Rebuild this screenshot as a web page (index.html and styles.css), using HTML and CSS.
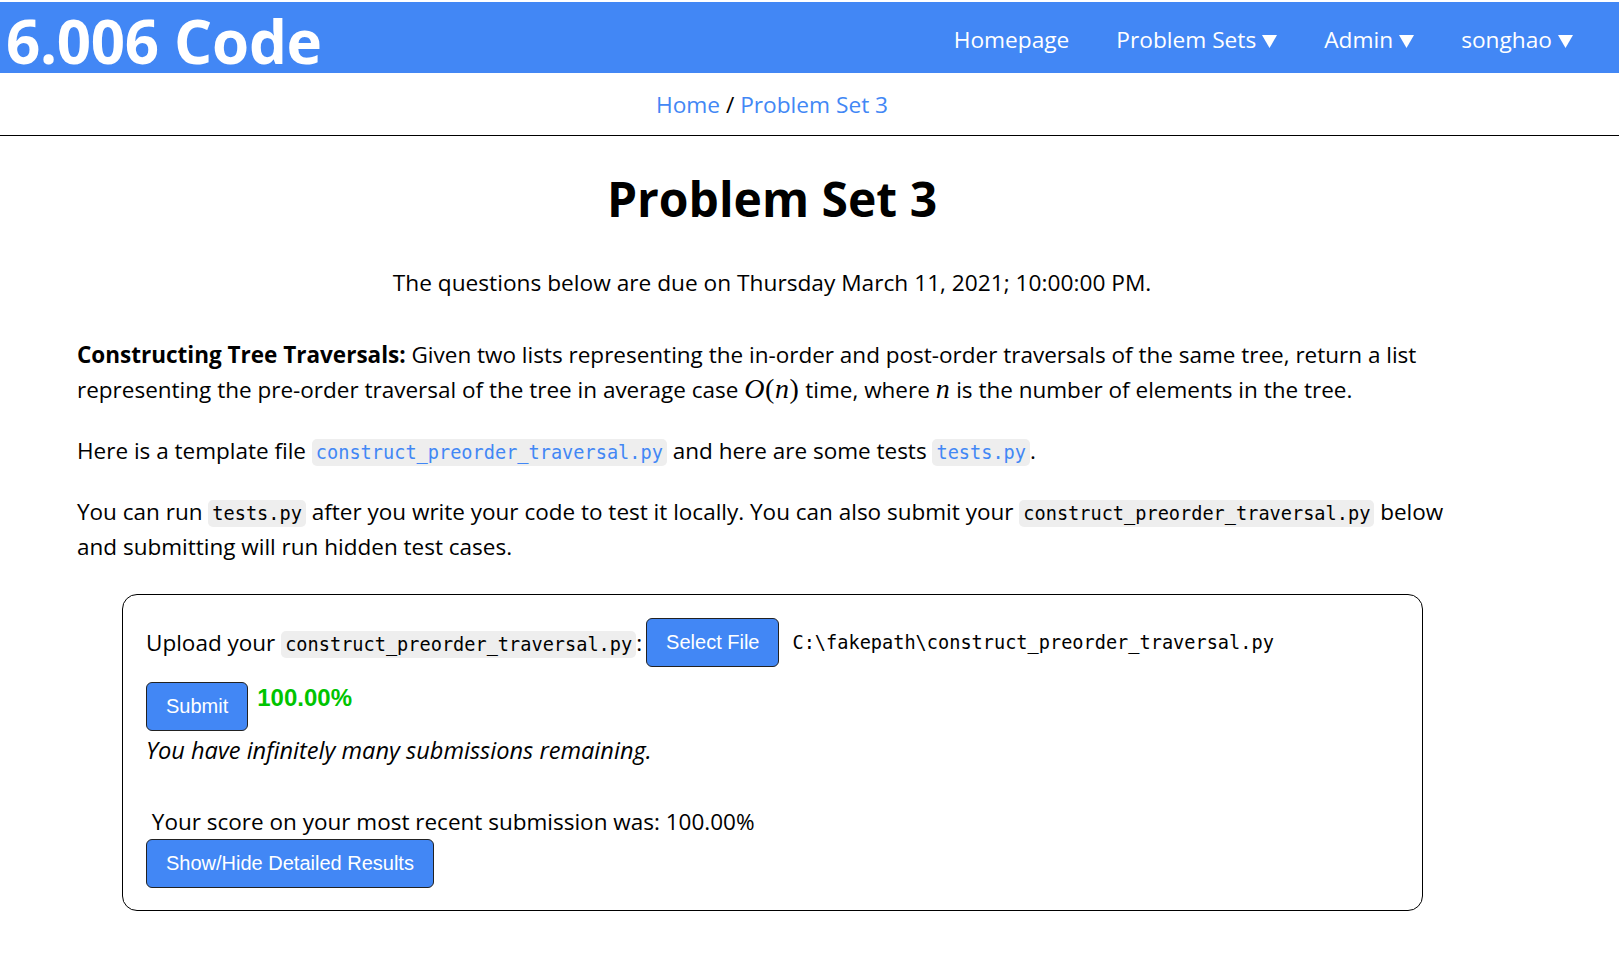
FILE: index.html
```html
<!DOCTYPE html>
<html lang="en">
<head>
<meta charset="utf-8">
<title>Problem Set 3 - 6.006 Code</title>
<link rel="stylesheet" href="styles.css">
</head>
<body>
<header class="topbar">
  <a class="brand" href="#">6.006 Code</a>
  <nav class="nav">
    <a class="nav-item" href="#">Homepage</a>
    <a class="nav-item" href="#">Problem Sets<svg class="caret" viewBox="0 0 15 13"><path d="M0 0H15L7.5 13Z"/></svg></a>
    <a class="nav-item" href="#">Admin<svg class="caret" viewBox="0 0 15 13"><path d="M0 0H15L7.5 13Z"/></svg></a>
    <a class="nav-item" href="#">songhao<svg class="caret" viewBox="0 0 15 13"><path d="M0 0H15L7.5 13Z"/></svg></a>
  </nav>
</header>
<div class="crumbs"><a href="#">Home</a> / <a href="#">Problem Set 3</a></div>
<main class="content">
  <h1 class="title">Problem Set 3</h1>
  <p class="due">The questions below are due on Thursday March 11, 2021; 10:00:00 PM.</p>
  <p class="para"><b>Constructing Tree Traversals:</b> Given two lists representing the in-order and post-order traversals of the same tree, return a list representing the pre-order traversal of the tree in average case <span class="math"><i>O</i>(<i>n</i>)</span> time, where <span class="math"><i>n</i></span> is the number of elements in the tree.</p>
  <p class="para">Here is a template file <a class="code code-link" href="#">construct_preorder_traversal.py</a> and here are some tests <a class="code code-link" href="#">tests.py</a>.</p>
  <p class="para">You can run <code class="code">tests.py</code> after you write your code to test it locally. You can also submit your <code class="code">construct_preorder_traversal.py</code> below and submitting will run hidden test cases.</p>
  <section class="submit-box">
    <div class="upload-row">
      <span class="upload-label">Upload your <code class="code">construct_preorder_traversal.py</code>:</span>
      <button class="btn btn-select">Select File</button>
      <span class="filename">C:\fakepath\construct_preorder_traversal.py</span>
    </div>
    <div class="submit-row">
      <button class="btn">Submit</button>
      <span class="score">100.00%</span>
    </div>
    <p class="remaining">You have infinitely many submissions remaining.</p>
    <p class="recent">&nbsp;Your score on your most recent submission was: 100.00%</p>
    <button class="btn">Show/Hide Detailed Results</button>
  </section>
</main>
</body>
</html>
```
FILE: styles.css
```css
* {
  box-sizing: border-box;
}

html,
body {
  margin: 0;
  padding: 0;
  background: #ffffff;
}

body {
  padding-top: 2px;
  font-family: "Open Sans", "Noto Sans", sans-serif;
  font-size: 22.5px;
  color: #000000;
}

a {
  color: #4287f5;
  text-decoration: none;
}

.topbar {
  display: flex;
  align-items: center;
  justify-content: space-between;
  height: 71px;
  padding: 0 46px 0 6px;
  background: #4287f5;
}

.brand {
  margin-top: 6px;
  color: #ffffff;
  font-weight: 700;
  font-size: 60px;
  line-height: 60px;
  letter-spacing: -0.3px;
}

.nav {
  display: flex;
  gap: 47px;
  margin-top: 4px;
}

.nav-item {
  color: #ffffff;
  font-size: 22.7px;
  line-height: 30px;
  white-space: nowrap;
}

.caret {
  width: 15px;
  height: 13px;
  margin-left: 6px;
  fill: #ffffff;
}

.crumbs {
  height: 63px;
  padding: 1px 75px 0 0;
  border-bottom: 1px solid #000000;
  font-size: 22.7px;
  line-height: 61px;
  text-align: center;
}

.content {
  width: 1390px;
  margin-left: 77px;
}

.title {
  margin: 34px 0 0;
  font-size: 48px;
  line-height: 58px;
  font-weight: 700;
  text-align: center;
}

.due {
  margin: 37px 0 0;
  font-size: 22.7px;
  line-height: 35px;
  text-align: center;
}

.para {
  margin: 37px 0 0;
  line-height: 35px;
}

.para + .para {
  margin-top: 26px;
}

.math {
  font-family: "Liberation Serif", "DejaVu Serif", serif;
  font-size: 28px;
  line-height: 1;
  letter-spacing: 0.6px;
}

.code {
  padding: 3px 4px;
  border-radius: 5px;
  background: #eeeeee;
  font-family: "DejaVu Sans Mono", "Liberation Mono", monospace;
  font-size: 18.6px;
  line-height: 1;
  color: #000000;
}

.code-link {
  color: #4287f5;
}

.submit-box {
  width: 1301px;
  margin: 30px 0 0 45px;
  padding: 23px 23px 22px;
  border: 1px solid #000000;
  border-radius: 15px;
}

.upload-row {
  display: flex;
  align-items: center;
  height: 49px;
}

.upload-label {
  line-height: 35px;
  white-space: nowrap;
}

.btn {
  height: 49px;
  padding: 0 19px;
  border: 1px solid #222222;
  border-radius: 6px;
  background: #4287f5;
  color: #ffffff;
  font-family: "Liberation Sans", Arial, sans-serif;
  font-size: 20px;
  cursor: pointer;
}

.btn-select {
  margin-left: 4px;
}

.filename {
  margin-left: 13px;
  font-family: "DejaVu Sans Mono", "Liberation Mono", monospace;
  font-size: 18.6px;
}

.submit-row {
  display: flex;
  align-items: flex-start;
  margin-top: 15px;
}

.score {
  margin: 4px 0 0 9px;
  color: #00c400;
  font-family: "Liberation Sans", Arial, sans-serif;
  font-weight: 700;
  font-size: 24px;
  line-height: 24px;
}

.remaining {
  margin: 2px 0 0;
  font-style: italic;
  font-size: 23.6px;
  line-height: 35px;
}

.recent {
  margin: 36px 0 0;
  line-height: 35px;
}
```
